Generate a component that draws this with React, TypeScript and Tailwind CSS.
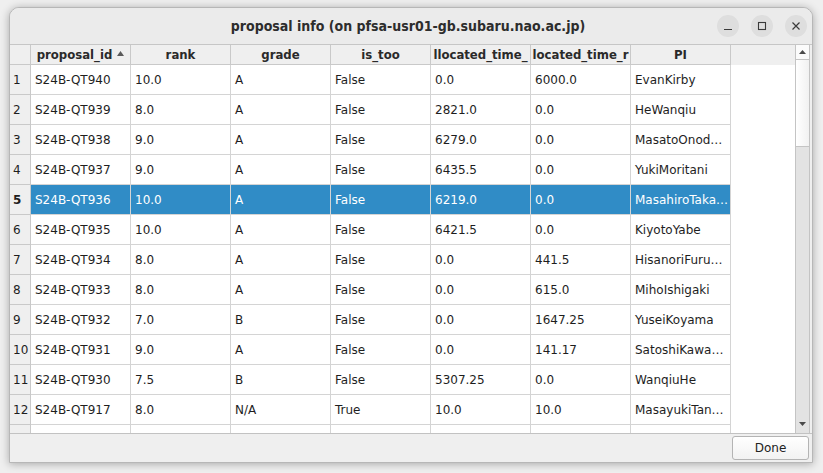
import React from "react";

const columns = ["proposal_id", "rank", "grade", "is_too", "llocated_time_", "located_time_r", "PI"];

const rows = [
  ["S24B-QT940", "10.0", "A", "False", "0.0", "6000.0", "EvanKirby"],
  ["S24B-QT939", "8.0", "A", "False", "2821.0", "0.0", "HeWanqiu"],
  ["S24B-QT938", "9.0", "A", "False", "6279.0", "0.0", "MasatoOnod…"],
  ["S24B-QT937", "9.0", "A", "False", "6435.5", "0.0", "YukiMoritani"],
  ["S24B-QT936", "10.0", "A", "False", "6219.0", "0.0", "MasahiroTaka…"],
  ["S24B-QT935", "10.0", "A", "False", "6421.5", "0.0", "KiyotoYabe"],
  ["S24B-QT934", "8.0", "A", "False", "0.0", "441.5", "HisanoriFuru…"],
  ["S24B-QT933", "8.0", "A", "False", "0.0", "615.0", "MihoIshigaki"],
  ["S24B-QT932", "7.0", "B", "False", "0.0", "1647.25", "YuseiKoyama"],
  ["S24B-QT931", "9.0", "A", "False", "0.0", "141.17", "SatoshiKawa…"],
  ["S24B-QT930", "7.5", "B", "False", "5307.25", "0.0", "WanqiuHe"],
  ["S24B-QT917", "8.0", "N/A", "True", "10.0", "10.0", "MasayukiTan…"],
];

const SELECTED = 4;

const condensed = { fontFamily: '"DejaVu Sans Condensed", "DejaVu Sans", sans-serif', fontStretch: "condensed" };

function TitleButton({ children }: { children: React.ReactNode }) {
  return (
    <div className="w-[22px] h-[22px] rounded-full bg-[#dedede] flex items-center justify-center">
      {children}
    </div>
  );
}

export default function App() {
  return (
    <div
      className="w-[823px] h-[473px] bg-[#efefef] pt-[7px] pl-[9px] overflow-hidden"
      style={{ fontFamily: '"DejaVu Sans", sans-serif' }}
    >
      <div className="w-[804px] h-[456px] rounded-t-[10px] border border-[#b7b7b7] bg-[#efefef] shadow-[0_1px_8px_rgba(0,0,0,0.3)] flex flex-col overflow-hidden">
        {/* title bar */}
        <div className="relative h-[37px] shrink-0 bg-[#ebebeb] border-b border-[#c6c6c6] flex items-center justify-center pr-[6px]">
          <span className="text-[14px] font-bold text-[#2d2d2d]" style={condensed}>
            proposal info (on pfsa-usr01-gb.subaru.nao.ac.jp)
          </span>
          <div className="absolute right-[5px] top-[7px] flex gap-[12px]">
            <TitleButton>
              <svg width="10" height="10" viewBox="0 0 10 10">
                <path d="M1 8.5h8" stroke="#3a3a3a" strokeWidth="1.2" />
              </svg>
            </TitleButton>
            <TitleButton>
              <svg width="10" height="10" viewBox="0 0 10 10">
                <rect x="1.5" y="1.5" width="7" height="7" fill="none" stroke="#3a3a3a" strokeWidth="1.1" />
              </svg>
            </TitleButton>
            <TitleButton>
              <svg width="10" height="10" viewBox="0 0 10 10">
                <path d="M1.5 1.5l7 7M8.5 1.5l-7 7" stroke="#3a3a3a" strokeWidth="1.2" />
              </svg>
            </TitleButton>
          </div>
        </div>

        {/* table viewport */}
        <div className="h-[389px] shrink-0 flex border-b border-[#c2c2c2]">
          <div className="w-[785px] h-full overflow-hidden bg-white flex flex-col">
            <div className="h-[20px] shrink-0 flex bg-[#efefef] text-[13px] font-bold text-[#2a2a2a]" style={condensed}>
              <div className="w-[21px] shrink-0 border-r border-b border-[#c9c9c9]" />
              {columns.map((c, i) => (
                <div
                  key={c}
                  className="w-[100px] shrink-0 border-r border-b border-[#c9c9c9] flex items-center justify-center overflow-hidden whitespace-nowrap"
                >
                  <span>{c}</span>
                  {i === 0 && (
                    <svg width="7" height="5" viewBox="0 0 7 5" className="ml-[5px] mb-[3px]">
                      <path d="M0 5L3.5 0L7 5Z" fill="#5a5a5a" />
                    </svg>
                  )}
                </div>
              ))}
              <div className="flex-1" />
            </div>
            {rows.map((r, ri) => {
              const sel = ri === SELECTED;
              return (
                <div key={ri} className="h-[30px] shrink-0 flex text-[12px]">
                  <div
                    className={
                      "w-[21px] shrink-0 bg-[#efefef] border-r border-b border-[#c9c9c9] flex items-center pl-[3px] text-[#1e1e1e] " +
                      (sel ? "font-bold" : "")
                    }
                  >
                    {ri + 1}
                  </div>
                  {r.map((v, ci) => (
                    <div
                      key={ci}
                      className={
                        "w-[100px] shrink-0 border-r border-b border-[#d4d4d4] flex items-center pl-[4px] whitespace-nowrap overflow-hidden " +
                        (sel ? "bg-[#308cc6] text-white" : "text-[#1e1e1e]")
                      }
                    >
                      {v}
                    </div>
                  ))}
                </div>
              );
            })}
            {/* partially visible next row */}
            <div className="h-[30px] shrink-0 flex">
              <div className="w-[21px] shrink-0 bg-[#efefef] border-r border-[#c9c9c9]" />
              {columns.map((c) => (
                <div key={c} className="w-[100px] shrink-0 border-r border-[#d4d4d4]" />
              ))}
            </div>
          </div>

          {/* scrollbar */}
          <div className="w-[15px] h-full shrink-0 flex flex-col bg-[#e3e3e3] border-l border-r border-[#c4c4c4]">
            <div className="h-[15px] shrink-0 bg-[#fbfbfb] border-b border-[#c4c4c4] flex items-center justify-center">
              <svg width="7" height="4" viewBox="0 0 7 4">
                <path d="M0 4L3.5 0L7 4Z" fill="#4a4a4a" />
              </svg>
            </div>
            <div className="h-[87px] shrink-0 bg-gradient-to-r from-[#ffffff] to-[#f1f1f1] border-b border-[#c4c4c4]" />
            <div className="flex-1" />
            <div className="h-[15px] shrink-0 flex items-center justify-center mb-[2px]">
              <svg width="7" height="4" viewBox="0 0 7 4">
                <path d="M0 0L3.5 4L7 0Z" fill="#4a4a4a" />
              </svg>
            </div>
          </div>
          <div className="w-[2px] shrink-0 bg-[#efefef]" />
        </div>

        {/* bottom bar */}
        <div className="flex-1 flex justify-end items-start pt-[2px] pr-[3px]">
          <button className="w-[77px] h-[24px] rounded-[3px] border border-[#b4b4b4] bg-gradient-to-b from-[#ffffff] to-[#f2f2f2] text-[12px] text-[#222]">
            Done
          </button>
        </div>
      </div>
    </div>
  );
}
